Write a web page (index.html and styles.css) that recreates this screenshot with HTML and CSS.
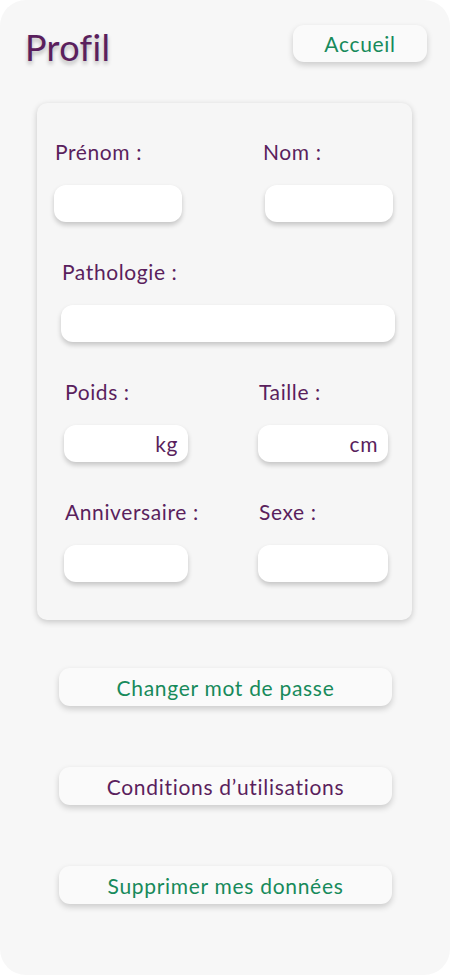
FILE: index.html
```html
<!DOCTYPE html>
<html lang="fr">
<head>
  <meta charset="UTF-8" />
  <meta name="viewport" content="width=device-width, initial-scale=1" />
  <title>Profil</title>
  <link rel="stylesheet" href="styles.css">
</head>
<body>

  <div class="screen">
    <div class="header">
      <h1 class="title">Profil</h1>
      <button class="btn home-btn">Accueil</button>
    </div>

    <div class="card">
      <div class="row row-names">
        <div class="field">
          <label>Prénom :</label>
          <input class="box" />
        </div>
        <div class="field field-nom">
          <label>Nom :</label>
          <input class="box" />
        </div>
      </div>

      <div class="row row-patho">
        <div class="field">
          <label>Pathologie :</label>
          <input class="box" />
        </div>
      </div>

      <div class="row row-body">
        <div class="field">
          <label>Poids :</label>
          <div class="box unit">kg</div>
        </div>
        <div class="field">
          <label>Taille :</label>
          <div class="box unit">cm</div>
        </div>
      </div>

      <div class="row row-body">
        <div class="field">
          <label>Anniversaire :</label>
          <input class="box" />
        </div>
        <div class="field">
          <label>Sexe :</label>
          <input class="box" />
        </div>
      </div>
    </div>

    <div class="actions">
      <button class="btn wide-btn green">Changer mot de passe</button>
      <button class="btn wide-btn purple">Conditions d’utilisations</button>
      <button class="btn wide-btn green">Supprimer mes données</button>
    </div>
  </div>

</body>
</html>
```

FILE: styles.css
```css
body {
  margin: 0;
  background: #fff;
  font-family: Lato, "Open Sans", sans-serif;
  color: #5a1f5d;
}
.screen {
  height: 975px;
  background: #f7f7f7;
  border-radius: 26px;
  box-sizing: border-box;
  padding: 25px 23px 0 25px;
  overflow: hidden;
}
.header {
  display: flex;
  justify-content: space-between;
  align-items: flex-start;
}
.title {
  margin: 0;
  font-size: 36px;
  font-weight: 400;
  line-height: 44px;
  letter-spacing: 0.3px;
  color: #5a1f5d;
  text-shadow: 0 3px 4px rgba(0, 0, 0, 0.28);
}
.btn {
  font-family: inherit;
  font-size: 21px;
  letter-spacing: 0.7px;
  border: none;
  background: #fafafa;
  border-radius: 11px;
  box-shadow: 0 3px 6px rgba(0, 0, 0, 0.18);
  cursor: pointer;
  padding: 0;
}
.home-btn {
  width: 134px;
  height: 37px;
  color: #178a5b;
}
.card {
  width: 375px;
  margin: 34px 0 0 12px;
  padding: 37px 0 38px;
  box-sizing: border-box;
  background: #f6f6f6;
  border-radius: 10px;
  box-shadow: 0 2px 6px rgba(0, 0, 0, 0.2);
  display: flex;
  flex-direction: column;
  gap: 38px;
}
.row {
  display: grid;
}
.row-names {
  grid-template-columns: 128px 128px;
  column-gap: 83px;
  padding-left: 17px;
}
.field-nom label {
  margin-left: -3px;
}
.row-patho {
  grid-template-columns: 334px;
  padding-left: 24px;
}
.row-body {
  grid-template-columns: 124px 130px;
  column-gap: 70px;
  padding-left: 27px;
}
.field {
  display: flex;
  flex-direction: column;
  gap: 21px;
}
.field label {
  font-size: 21px;
  line-height: 24px;
  letter-spacing: 0.6px;
  padding-left: 1px;
  white-space: nowrap;
}
.box {
  height: 37px;
  border: none;
  border-radius: 12px;
  background: #fff;
  box-shadow: 0 3px 5px rgba(0, 0, 0, 0.2);
  box-sizing: border-box;
  font-family: inherit;
  font-size: 21px;
  letter-spacing: 0.6px;
  color: #5a1f5d;
}
.unit {
  display: flex;
  align-items: center;
  justify-content: flex-end;
  padding-right: 10px;
}
.actions {
  display: flex;
  flex-direction: column;
  gap: 61px;
  margin: 48px 0 0 34px;
}
.wide-btn {
  width: 333px;
  height: 38px;
}
.green { color: #178a5b; }
.purple { color: #5a1f5d; }
```
